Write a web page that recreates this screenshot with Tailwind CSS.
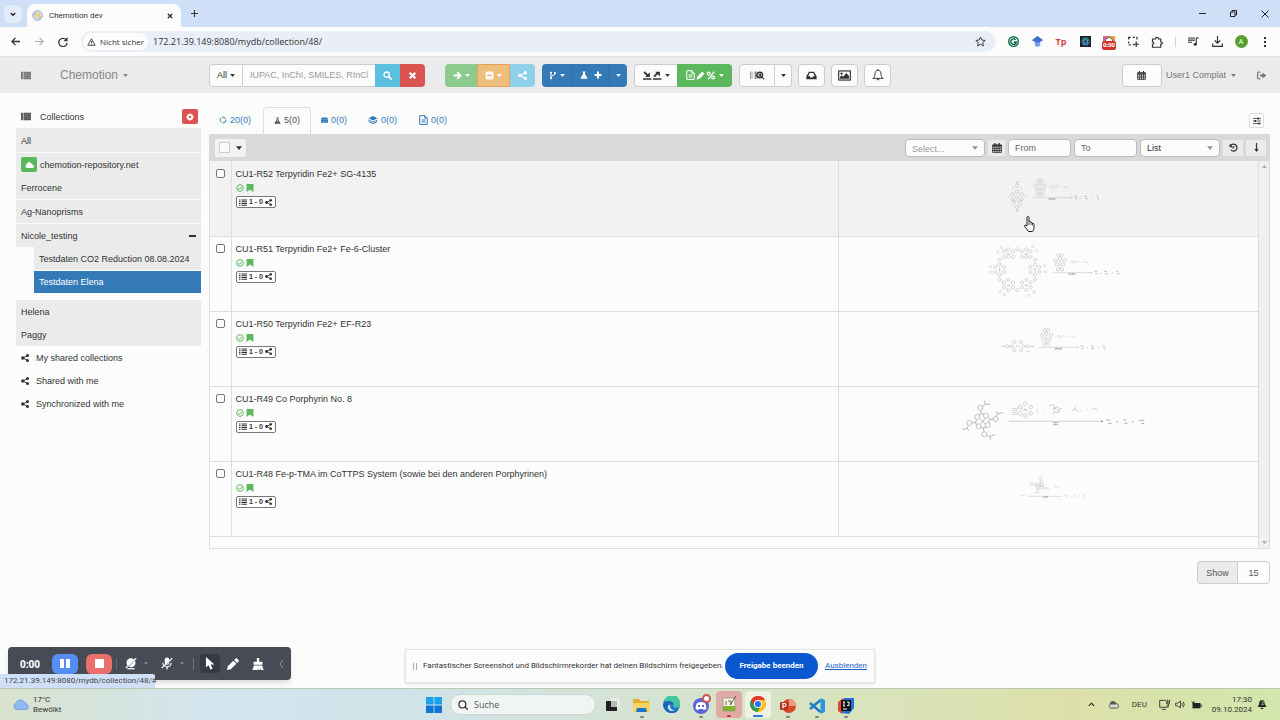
<!DOCTYPE html>
<html lang="de">
<head>
  <meta charset="UTF-8">
  <title>Chemotion dev</title>
  <meta name="viewport" content="width=device-width, initial-scale=1.0">
  <script src="https://cdn.jsdelivr.net/npm/@tailwindcss/browser@4"></script>
</head>
<body class="relative flex flex-col min-h-screen bg-[#fcfcfc] font-['Liberation_Sans',Arial,sans-serif] text-[9px] leading-3 text-[#333] overflow-x-hidden">

  <!-- Icon sprite -->
  <svg class="absolute w-0 h-0" aria-hidden="true">
    <symbol id="caret" viewBox="0 0 8 5"><path d="M0 0h8L4 5z" fill="currentColor"/></symbol>
    <symbol id="list" viewBox="0 0 16 14"><path d="M0 1h3v12H0zM4 1h12v12H4z" fill="currentColor"/><path d="M4 4h12M4 7h12M4 10h12" stroke="#fff" stroke-opacity=".25"/></symbol>
    <symbol id="listlines" viewBox="0 0 16 14"><path d="M0 2h3M5 2h11M0 5.500h3M5 5.500h11M0 9h3M5 9h11M0 12.500h3M5 12.500h11" stroke="currentColor" stroke-width="2.200"/></symbol>
    <symbol id="share" viewBox="0 0 16 16"><path d="M13 3 4 8l9 5" fill="none" stroke="currentColor" stroke-width="2"/><circle cx="13" cy="3" r="3" fill="currentColor"/><circle cx="3.500" cy="8" r="3.300" fill="currentColor"/><circle cx="13" cy="13" r="3" fill="currentColor"/></symbol>
    <symbol id="search" viewBox="0 0 16 16"><circle cx="6.500" cy="6.500" r="4.700" fill="none" stroke="currentColor" stroke-width="2.400"/><path d="m10 10 4.500 4.500" stroke="currentColor" stroke-width="3" stroke-linecap="round"/></symbol>
    <symbol id="times" viewBox="0 0 16 16"><path d="m3 3 10 10M13 3 3 13" stroke="currentColor" stroke-width="4"/></symbol>
    <symbol id="arrow-right" viewBox="0 0 16 16"><path d="M1 8h12M7.500 2l6 6-6 6" fill="none" stroke="currentColor" stroke-width="3.200"/></symbol>
    <symbol id="minus-square" viewBox="0 0 16 16"><rect x="1" y="1" width="14" height="14" rx="3" fill="currentColor"/><path d="M4 8h8" stroke="#f0ad4e" stroke-width="2.400"/></symbol>
    <symbol id="fork" viewBox="0 0 16 16"><path d="M4 3v10M12 3v2c0 3-8 3-8 6" fill="none" stroke="currentColor" stroke-width="2"/><circle cx="4" cy="2.500" r="2.200" fill="currentColor"/><circle cx="12" cy="3" r="2.200" fill="currentColor"/><circle cx="4" cy="13.500" r="2.200" fill="currentColor"/></symbol>
    <symbol id="flask" viewBox="0 0 16 16"><path d="M5 1h6v1.500h-1V6l5 8c.3 1-.2 1.500-1 1.500H2c-.8 0-1.300-.5-1-1.500l5-8V2.500H5z" fill="currentColor"/><path d="M7.500 3v3.500L5.500 10h5l-2-3.500V3z" fill="#fff" fill-opacity=".6"/></symbol>
    <symbol id="plus" viewBox="0 0 16 16"><path d="M8 1v14M1 8h14" stroke="currentColor" stroke-width="4"/></symbol>
    <symbol id="export" viewBox="0 0 36 16"><path d="M0 13h16v3H0zM19 13h16v3H19z" fill="currentColor"/><path d="m2 1 7 7M21 10l7-7" stroke="currentColor" stroke-width="3.500"/><path d="M4 11h9V2zM23 1h9v9z" fill="currentColor"/></symbol>
    <symbol id="doc" viewBox="0 0 14 16"><path d="M1 1h8l4 4v10H1zM9 1v4h4M4 8h6M4 11h6" fill="none" stroke="currentColor" stroke-width="1.600"/></symbol>
    <symbol id="pencil" viewBox="0 0 16 16"><path d="m1 15 1-5 9-9 4 4-9 9z" fill="currentColor"/></symbol>
    <symbol id="percent" viewBox="0 0 16 16"><path d="m14 1-11 14" stroke="currentColor" stroke-width="2.200"/><circle cx="4" cy="4.500" r="2.600" fill="none" stroke="currentColor" stroke-width="2.200"/><circle cx="12" cy="11.500" r="2.600" fill="none" stroke="currentColor" stroke-width="2.200"/></symbol>
    <symbol id="barcode" viewBox="0 0 26 16"><path d="M1 1v13" stroke="#888" stroke-width="2"/><path d="M4 1v13M7 1v13" stroke="#aaa"/><path d="M10 1v13" stroke="#555" stroke-width="2"/><circle cx="17" cy="7" r="5" fill="none" stroke="currentColor" stroke-width="2.500"/><path d="M16 4v6m2.500-6v6M21 11l4 4" stroke="currentColor" stroke-width="2"/></symbol>
    <symbol id="inbox" viewBox="0 0 16 14"><path d="M4 1h8l4 7v5H0V8zM5 3 3 8h2.500l1 2h3l1-2H13l-2-5z" fill="currentColor" fill-rule="evenodd"/></symbol>
    <symbol id="image" viewBox="0 0 20 16"><rect x="1" y="1" width="18" height="14" fill="none" stroke="currentColor" stroke-width="1.800"/><circle cx="5.500" cy="5" r="1.800" fill="currentColor"/><path d="M3 13v-3l3-2 2 2 5-6 4 5v4z" fill="currentColor"/></symbol>
    <symbol id="bell" viewBox="0 0 16 16"><path d="M8 1.500C5 2 4 4 4 7c0 3-1.500 4-2.800 5.500h13.600C13.500 11 12 10 12 7c0-3-1-5-4-5.500zM6.300 13c.2 2 3.200 2 3.400 0M8 0v2" fill="none" stroke="currentColor" stroke-width="1.300"/></symbol>
    <symbol id="calendar" viewBox="0 0 16 16"><path d="M1 3h14v12H1zM1 6h14M1 9h14M1 12h14M4.500 6v9M8 6v9M11.500 6v9" fill="none" stroke="currentColor" stroke-width="1.400"/><path d="M1 3h14v2H1z" fill="currentColor"/><path d="M4.500 0v4M11.500 0v4" stroke="currentColor" stroke-width="2"/></symbol>
    <symbol id="logout" viewBox="0 0 18 16"><path d="M7 2H4Q2 2 2 4v8q0 2 2 2h3" fill="none" stroke="currentColor" stroke-width="2.200"/><path d="M6 6.200h5V2.500L17.500 8 11 13.500V9.800H6z" fill="currentColor"/></symbol>
    <symbol id="gear" viewBox="0 0 16 16"><path d="M6.500 1h3l.5 2 1.800-.8 2 2L13 6l2 .5v3l-2 .5.8 1.800-2 2L10 13l-.5 2h-3L6 13l-1.800.8-2-2L3 10l-2-.5v-3L3 6l-.8-1.800 2-2L6 3zM8 5.500a2.500 2.500 0 1 0 0 5 2.500 2.500 0 0 0 0-5z" fill="currentColor" fill-rule="evenodd"/></symbol>
    <symbol id="cloud" viewBox="0 0 18 12"><path d="M4 12a4 4 0 0 1-.7-7.500A5 5 0 0 1 12.500 3 3.500 3.500 0 0 1 15 6a3 3 0 0 1 0 6z" fill="currentColor"/></symbol>
    <symbol id="ring-sample" viewBox="0 0 16 16"><circle cx="8" cy="8" r="5.800" fill="none" stroke="currentColor" stroke-width="2" stroke-dasharray="10 2.100"/></symbol>
    <symbol id="plate" viewBox="0 0 16 12"><path d="M2 0h12l2 4v8H0V4z" fill="currentColor"/><path d="M0 5h16M2 9h12" stroke="#fff" stroke-opacity=".5"/></symbol>
    <symbol id="layers" viewBox="0 0 18 16"><path d="m9 0 9 4.500L9 9 0 4.500z" fill="currentColor"/><path d="m0 8 9 4.500L18 8M0 11l9 4.500 9-4.500" fill="none" stroke="currentColor" stroke-width="1.800"/></symbol>
    <symbol id="sliders" viewBox="0 0 16 16"><path d="M0 3h16M0 8h16M0 13h16" stroke="currentColor" stroke-width="1.500"/><path d="M9 1h3v4H9zM3 6h3v4H3zM10 11h3v4h-3z" fill="currentColor"/></symbol>
    <symbol id="undo" viewBox="0 0 16 16"><path d="M3 4.500A6.200 6.200 0 1 1 3 12" fill="none" stroke="currentColor" stroke-width="2.200"/><path d="M1 1v6.500h6.500z" fill="currentColor"/><path d="M8.500 5v4H6" fill="none" stroke="currentColor" stroke-width="1.600"/></symbol>
    <symbol id="arrow-down" viewBox="0 0 8 16"><path d="M4 0v13" stroke="currentColor" stroke-width="2.200"/><path d="M0 10.500h8L4 16z" fill="currentColor"/></symbol>
    <symbol id="check" viewBox="0 0 16 16"><circle cx="8" cy="8" r="6.700" fill="none" stroke="currentColor" stroke-width="2"/><path d="m4.500 8 2.700 2.700 4.500-5" fill="none" stroke="currentColor" stroke-width="2"/></symbol>
    <symbol id="bookmark" viewBox="0 0 12 14"><path d="M0 0h12v14L6 9.500 0 14z" fill="currentColor"/></symbol>

    <!-- Parts of the reaction schemes -->
    <marker id="ring" viewBox="0 0 14 14" refX="7" refY="7" markerWidth="14" markerHeight="14" markerUnits="userSpaceOnUse"><path d="m7 2 4.500 2.500v5L7 12 2.500 9.500v-5z" fill="none" stroke="#bdbdbd" stroke-width="1.800"/></marker>
    <marker id="ring-sm" viewBox="0 0 14 14" refX="7" refY="7" markerWidth="14" markerHeight="14" markerUnits="userSpaceOnUse"><path d="m7 3 3 4-3 4-3-4zM2 4l2 1M10 9l3 2M3 11l2-2M10 5l2-2" fill="none" stroke="#c8c8c8" stroke-width="1.500"/></marker>
    <marker id="ring-lg" viewBox="0 0 24 24" refX="12" refY="12" markerWidth="24" markerHeight="24" markerUnits="userSpaceOnUse"><path d="m12 4 7 4v8l-7 4-7-4V8z" fill="none" stroke="#999" stroke-width="1.800"/></marker>
    <marker id="ring-lg-light" viewBox="0 0 24 24" refX="12" refY="12" markerWidth="24" markerHeight="24" markerUnits="userSpaceOnUse"><path d="m12 6 5 3v6l-5 3-5-3V9z" fill="none" stroke="#b5b5b5" stroke-width="1.800"/></marker>
    <g id="reagents" fill="none" stroke="#c4c4c4" stroke-width="2">
      <polyline points="324,61 334,61 315,76 329,72 343,76 320,88 338,88 323,103 335,103" stroke="none" marker-start="url(#ring)" marker-mid="url(#ring)" marker-end="url(#ring)"/>
      <path d="M329 78v22"/>
      <path d="M356 82h3M362 81l7-3 5 4 6-4 5 1M395 81h3M402 78l5 4 7 1M370 83l-5 3"/>
      <path d="M306 113h118" stroke="#ccc"/><path d="m422 111 5 2-5 2z" fill="#aaa" stroke="none"/>
      <path d="M355 117h21" stroke="#aaa" stroke-width="5" stroke-dasharray="4 1"/>
      <path d="M432 109h8M435 116h6M450 114h3M462 109h8M464 116h8M485 114h3M498 109h6M500 116h7" stroke="#bbb" stroke-width="3"/>
    </g>
  </svg>

  <!-- Browser tab strip -->
  <div class="flex items-end h-[27px] pl-1 bg-[#cfdff8] font-[Roboto,sans-serif]">
    <button aria-label="Tabs durchsuchen" class="flex items-center justify-center w-[18px] h-[18px] mb-1 rounded-md bg-[#e3ecfb]"><svg class="w-[6px] h-[5px]" viewBox="0 0 8 6"><path d="m1 1 3 3 3-3" fill="none" stroke="#222" stroke-width="1.800"/></svg></button>
    <div class="flex items-center gap-[6px] w-[154px] h-[23px] ml-[5px] px-[5px] rounded-t-lg bg-[#fcfcfc] text-[8px]">
      <svg class="w-[11px] h-[11px]" viewBox="0 0 22 22"><circle cx="11" cy="11" r="9.500" fill="#e4ecef" stroke="#7fa8c4" stroke-width="2"/><path d="M7 6h8v10H7z" fill="#f2d7a0" stroke="#d9a860"/><path d="M4 11a7 7 0 0 1 4-6M18 11a7 7 0 0 1-4 6" fill="none" stroke="#888"/></svg>
      <span class="grow">Chemotion dev</span>
      <button aria-label="Tab schließen" class="px-[3px]"><svg class="w-[6px] h-[6px]" viewBox="0 0 8 8"><path d="m1 1 6 6M7 1 1 7" stroke="#222" stroke-width="1.500"/></svg></button>
    </div>
    <button aria-label="Neuer Tab" class="flex items-center justify-center w-[26px] h-[27px]"><svg class="w-[7px] h-[7px]" viewBox="0 0 8 8"><path d="M4 0v8M0 4h8" stroke="#333" stroke-width="1.200"/></svg></button>
    <div class="flex ml-auto h-[27px]">
      <button aria-label="Minimieren" class="flex items-center justify-center w-[31px]"><svg class="w-[7px] h-[7px]" viewBox="0 0 7 7"><path d="M0 3.500h7" stroke="#222"/></svg></button>
      <button aria-label="Verkleinern" class="flex items-center justify-center w-[31px]"><svg class="w-[7px] h-[7px]" viewBox="0 0 14 14"><path d="M1 4h9v9H1zM4 4V1h9v9h-3" fill="none" stroke="#222" stroke-width="2"/></svg></button>
      <button aria-label="Schließen" class="flex items-center justify-center w-[31px]"><svg class="w-[8px] h-[8px]" viewBox="0 0 8 8"><path d="m.5.500 7 7M7.500.500l-7 7" stroke="#222"/></svg></button>
    </div>
  </div>

  <!-- Browser toolbar -->
  <div class="flex items-center h-[30px] px-[3px] border-b border-[#e0e3e6] bg-[#fcfcfc] font-['Open_Sans',sans-serif]">
    <button aria-label="Zurück" class="flex justify-center w-6"><svg class="w-[9px] h-[9px]" viewBox="0 0 10 10"><path d="M10 5H1m4-4L1 5l4 4" fill="none" stroke="#333" stroke-width="1.400"/></svg></button>
    <button aria-label="Vorwärts" class="flex justify-center w-6"><svg class="w-[9px] h-[9px]" viewBox="0 0 10 10"><path d="M0 5h9M5 1l4 4-4 4" fill="none" stroke="#aaa" stroke-width="1.200"/></svg></button>
    <button aria-label="Neu laden" class="flex justify-center w-6"><svg class="w-[10px] h-[10px]" viewBox="0 0 12 12"><path d="M10 3.500A5 5 0 1 0 11 7" fill="none" stroke="#333" stroke-width="1.500"/><path d="M11.500 0v5h-5z" fill="#333"/></svg></button>
    <div class="flex items-center grow h-[21px] ml-[6px] mr-[5px] pl-[2px] pr-[10px] rounded-full bg-[#e9eef8]">
      <button class="flex items-center gap-1 h-[17px] px-1 rounded-full bg-[#fcfcfc] text-[8px]">
        <svg class="w-[9px] h-[8px]" viewBox="0 0 12 11"><path d="M6 1 11 10H1zM6 4v3M6 8v1" fill="none" stroke="#333" stroke-width="1.200"/></svg>Nicht sicher</button>
      <input aria-label="Adresse" value="172.21.39.149:8080/mydb/collection/48/" class="grow ml-[5px] bg-transparent text-[9px] outline-none">
      <svg class="w-[11px] h-[11px]" viewBox="0 0 16 16"><path d="m8 1.500 2 4.400 4.800.5-3.600 3.200 1 4.800L8 12l-4.200 2.400 1-4.800L1.200 6.400 6 5.900z" fill="none" stroke="#333" stroke-width="1.400"/></svg>
    </div>
    <div class="flex items-center">
      <span class="flex justify-center w-6"><svg class="w-[11px] h-[11px]" viewBox="0 0 16 16"><circle cx="8" cy="8" r="7" fill="#e8f4ee" stroke="#12704a" stroke-width="2"/><path d="M11 5.500A4 4 0 1 0 12 9H8.500" fill="none" stroke="#0c5a4a" stroke-width="2"/></svg></span>
      <span class="flex justify-center w-6"><svg class="w-[11px] h-[11px]" viewBox="0 0 16 16"><path d="M8 0 0 6l4 2v6l4 2 4-2V8l4-2z" fill="#7ba4ee"/><path d="M8 0 0 6l8 4 8-4z" fill="#3f6fd0"/></svg></span>
      <span class="flex justify-center w-6 text-[9px] font-bold text-[#d5453c]">Tp</span>
      <span class="flex justify-center w-6"><svg class="w-[11px] h-[11px]" viewBox="0 0 16 16"><path d="M0 0h16v16H0z" fill="#1b222c"/><g fill="none" stroke="#4fb4dd"><ellipse cx="8" cy="8" rx="6" ry="2.500"/><ellipse cx="8" cy="8" rx="6" ry="2.500" transform="rotate(60 8 8)"/><ellipse cx="8" cy="8" rx="6" ry="2.500" transform="rotate(120 8 8)"/></g></svg></span>
      <span class="relative flex justify-center w-6"><svg class="w-[12px] h-[12px]" viewBox="0 0 16 16"><path d="M0 0h8v8H0z" fill="#e25fa0"/><path d="M8 0h8v8H8z" fill="#e9a13b"/><path d="M3 7a5 5 0 0 1 10 0" fill="#fff" stroke="#333"/></svg><span class="absolute top-[5px] px-px rounded-xs bg-[#d0342c] text-[6px] leading-[9px] font-bold text-white">0:00</span></span>
      <span class="flex justify-center w-6"><svg class="w-[11px] h-[11px]" viewBox="0 0 16 16"><path d="M1 5V2h3M7 2h3M13 5V2h-1M1 8v3M1 13h3M7 13h2M12 8v8M8 12h8" fill="none" stroke="#333" stroke-width="1.800"/></svg></span>
      <span class="flex justify-center w-6"><svg class="w-[12px] h-[12px]" viewBox="0 0 16 16"><path d="M2 4h4c0-3 4-3 4 0h3v4c3 0 3 3 0 3v4H2v-4c2.500 0 2.500-3 0-3z" fill="none" stroke="#333" stroke-width="1.600"/></svg></span>
      <span class="flex justify-center w-3"><span class="w-px h-[10px] bg-[#c5d6f5]"></span></span>
      <span class="flex justify-center w-6"><svg class="w-[11px] h-[11px]" viewBox="0 0 16 16"><path d="M0 3h10M0 6h10M0 9h6M12 12V3h4" fill="none" stroke="#333" stroke-width="1.600"/><circle cx="10.500" cy="12" r="2.200" fill="#333"/></svg></span>
      <span class="flex justify-center w-6"><svg class="w-[11px] h-[11px]" viewBox="0 0 16 16"><path d="M8 0v10M4 6.500l4 4 4-4M1 11v4h14v-4" fill="none" stroke="#333" stroke-width="1.700"/></svg></span>
      <span class="flex justify-center w-6"><span class="w-[13px] h-[13px] rounded-full bg-[#5a9e32] text-center text-[7px] leading-[13px] text-white">A</span></span>
      <span class="flex justify-center w-6"><svg class="w-[3px] h-[10px]" viewBox="0 0 3 10"><path d="M0 0h2v2H0zM0 4h2v2H0zM0 8h2v2H0z" fill="#333"/></svg></span>
    </div>
  </div>

  <!-- App navigation -->
  <nav class="flex items-center h-[36px] pl-[21px] pr-[13px] bg-[#ebebeb] text-[#777]">
    <button aria-label="Menü"><svg class="w-[10px] h-[9px]"><use href="#list"/></svg></button>
    <a href="#" class="flex items-center gap-[5px] w-[149px] ml-[29px] text-[12px] text-[#888]">Chemotion <svg class="w-[5px] h-[3px]"><use href="#caret"/></svg></a>
    <div class="flex h-[23px] text-[#333]">
      <button class="flex items-center justify-center gap-[3px] w-[34px] rounded-l-sm border border-[#ccc] bg-[#fcfcfc]">All <svg class="w-[5px] h-[3px]"><use href="#caret"/></svg></button>
      <input aria-label="Suche" placeholder="IUPAC, InChI, SMILES, RInChI" class="w-[132px] px-[7px] border-y border-[#ccc] bg-[#fcfcfc] outline-none placeholder:text-[#999]">
      <button aria-label="Suchen" class="flex items-center justify-center w-[25px] bg-[#5bc0de] text-white"><svg class="w-[9px] h-[9px]"><use href="#search"/></svg></button>
      <button aria-label="Leeren" class="flex items-center justify-center w-[25px] rounded-r-sm bg-[#d9534f] text-white"><svg class="w-[9px] h-[9px]"><use href="#times"/></svg></button>
    </div>
    <div class="flex h-[23px] ml-5 text-white">
      <button aria-label="Verschieben" class="flex items-center justify-center gap-[3px] w-8 rounded-l-sm bg-[#8dca8d]"><svg class="w-[9px] h-[9px]"><use href="#arrow-right"/></svg><svg class="w-[5px] h-[3px]"><use href="#caret"/></svg></button>
      <button aria-label="Entfernen" class="flex items-center justify-center gap-[3px] w-[33px] border border-[#eba05a] bg-[#eebe7c]"><svg class="w-[9px] h-[9px]"><use href="#minus-square"/></svg><svg class="w-[5px] h-[3px]"><use href="#caret"/></svg></button>
      <button aria-label="Teilen" class="flex items-center justify-center w-[25px] rounded-r-sm bg-[#8dd2e8]"><svg class="w-[9px] h-[9px]"><use href="#share"/></svg></button>
    </div>
    <div class="flex h-[23px] ml-[7px] rounded-sm bg-[#337ab7] text-white">
      <button aria-label="Aufteilen" class="flex items-center justify-center gap-[3px] w-[30px] border-r border-[#2e6da4]"><svg class="w-[8px] h-[9px]"><use href="#fork"/></svg><svg class="w-[5px] h-[3px]"><use href="#caret"/></svg></button>
      <button aria-label="Neue Reaktion" class="flex items-center justify-center gap-[6px] w-[38px] border-r border-[#2e6da4]"><svg class="w-[8px] h-[8px]"><use href="#flask"/></svg><svg class="w-[8px] h-[8px]"><use href="#plus"/></svg></button>
      <button aria-label="Neu" class="flex items-center justify-center w-[17px]"><svg class="w-[5px] h-[3px]"><use href="#caret"/></svg></button>
    </div>
    <div class="flex h-[23px] ml-[7px] text-[#333]">
      <button aria-label="Import und Export" class="flex items-center justify-center gap-[3px] w-[43px] rounded-l-sm border border-r-0 border-[#ccc] bg-[#fcfcfc]"><svg class="w-[19px] h-[9px]"><use href="#export"/></svg><svg class="w-[5px] h-[3px]"><use href="#caret"/></svg></button>
      <button aria-label="Bericht" class="flex items-center justify-center gap-px w-[55px] rounded-r-sm bg-[#5cb85c] text-white"><svg class="w-[9px] h-[10px]"><use href="#doc"/></svg><svg class="w-[9px] h-[9px]"><use href="#pencil"/></svg><svg class="w-[10px] h-[9px]"><use href="#percent"/></svg><svg class="w-[5px] h-[3px] ml-[2px]"><use href="#caret"/></svg></button>
    </div>
    <div class="flex h-[23px] ml-[7px] text-[#333]">
      <button aria-label="Barcode scannen" class="flex items-center justify-center w-[36px] rounded-l-sm border border-[#ccc] bg-[#fcfcfc]"><svg class="w-[15px] h-[9px]"><use href="#barcode"/></svg></button>
      <button aria-label="Scan-Optionen" class="flex items-center justify-center w-[17px] rounded-r-sm border border-l-0 border-[#ccc] bg-[#fcfcfc]"><svg class="w-[5px] h-[3px]"><use href="#caret"/></svg></button>
    </div>
    <div class="flex h-[23px] gap-[6px] ml-[6px] text-[#333]">
      <button aria-label="Posteingang" class="flex items-center justify-center w-[27px] rounded-sm border border-[#ccc] bg-[#fcfcfc]"><svg class="w-[11px] h-[9px]"><use href="#inbox"/></svg></button>
      <button aria-label="Bilder" class="flex items-center justify-center w-[27px] rounded-sm border border-[#ccc] bg-[#fcfcfc]"><svg class="w-[13px] h-[11px]"><use href="#image"/></svg></button>
      <button aria-label="Benachrichtigungen" class="flex items-center justify-center w-[27px] rounded-sm border border-[#ccc] bg-[#fcfcfc]"><svg class="w-[12px] h-[12px]"><use href="#bell"/></svg></button>
    </div>
    <div class="flex items-center h-[23px] ml-auto">
      <button aria-label="Kalender" class="flex items-center justify-center w-10 h-full rounded-sm border border-[#ccc] bg-[#fcfcfc] text-[#333]"><svg class="w-[9px] h-[9px]"><use href="#calendar"/></svg></button>
      <a href="#" class="flex items-center gap-[5px] ml-1">User1 Complat <svg class="w-[5px] h-[3px]"><use href="#caret"/></svg></a>
      <button aria-label="Abmelden" class="ml-5"><svg class="w-[11px] h-[9px]"><use href="#logout"/></svg></button>
    </div>
  </nav>

  <main class="flex grow items-start gap-2 pl-4 pr-[10px] pt-[14px] pb-[100px]">

    <!-- Collections -->
    <aside class="w-[185px] shrink-0">
      <div class="flex items-center h-[22px] pb-[2px] pl-[5px] pr-[3px] border-b border-[#ebebeb]">
        <svg class="w-[10px] h-[9px] text-[#555]"><use href="#list"/></svg>
        <span class="grow ml-[9px]">Collections</span>
        <button aria-label="Sammlungen verwalten" class="flex items-center justify-center w-4 h-[15px] rounded-xs bg-[#d9534f] text-white"><svg class="w-[8px] h-[8px]"><use href="#gear"/></svg></button>
      </div>
      <ul>
        <li class="flex items-center h-6 px-[5px] border-b border-[#fcfcfc] bg-[#ebebeb]"><a href="#">All</a></li>
        <li class="flex items-center gap-[3px] h-[23px] px-[5px] bg-[#ebebeb]"><span class="flex items-center justify-center w-4 h-[15px] rounded-xs bg-[#5cb85c] text-white"><svg class="w-[9px] h-[6px]"><use href="#cloud"/></svg></span><a href="#">chemotion-repository.net</a></li>
        <li class="flex items-center h-6 px-[5px] border-b border-[#fcfcfc] bg-[#ebebeb]"><a href="#">Ferrocene</a></li>
        <li class="flex items-center h-6 px-[5px] border-b border-[#fcfcfc] bg-[#ebebeb]"><a href="#">Ag-Nanoprisms</a></li>
        <li>
          <div class="flex items-center justify-between h-[23px] px-[5px] bg-[#ebebeb]"><a href="#">Nicole_testing</a><button aria-label="Zuklappen" class="w-[7px] h-[2px] bg-[#333]"></button></div>
          <ul class="ml-[18px] mb-[7px]">
            <li class="flex items-center h-6 px-[5px] border-b border-[#fcfcfc] bg-[#ebebeb] whitespace-nowrap"><a href="#">Testdaten CO2 Reduction 08.08.2024</a></li>
            <li class="flex items-center h-[22px] px-[5px] bg-[#337ab7] text-white"><a href="#">Testdaten Elena</a></li>
          </ul>
        </li>
        <li class="flex items-center h-[23px] px-[5px] bg-[#ebebeb]"><a href="#">Helena</a></li>
        <li class="flex items-center h-[23px] px-[5px] bg-[#ebebeb]"><a href="#">Paggy</a></li>
        <li class="flex items-center gap-[7px] h-[23px] px-[5px]"><svg class="w-[8px] h-[8px]"><use href="#share"/></svg><a href="#">My shared collections</a></li>
        <li class="flex items-center gap-[7px] h-[23px] px-[5px]"><svg class="w-[8px] h-[8px]"><use href="#share"/></svg><a href="#">Shared with me</a></li>
        <li class="flex items-center gap-[7px] h-[23px] px-[5px]"><svg class="w-[8px] h-[8px]"><use href="#share"/></svg><a href="#">Synchronized with me</a></li>
      </ul>
    </aside>

    <!-- Element list -->
    <section class="grow min-w-0">
      <div class="flex items-center h-[27px] text-[#337ab7]">
        <a href="#" class="flex items-center gap-[3px] h-full pb-[2px] pl-[10px] pr-3"><svg class="w-[8px] h-[8px]"><use href="#ring-sample"/></svg>20(0)</a>
        <a href="#" class="flex items-center gap-[3px] h-full pb-[2px] px-[10px] rounded-t-sm border border-b-0 border-[#ddd] text-[#555]"><svg class="w-[7px] h-[7px]"><use href="#flask"/></svg>5(0)</a>
        <a href="#" class="flex items-center gap-[3px] h-full pb-[2px] px-[10px]"><svg class="w-[7px] h-[6px]"><use href="#plate"/></svg>0(0)</a>
        <a href="#" class="flex items-center gap-[3px] h-full pb-[2px] px-[11px]"><svg class="w-[10px] h-[8px]"><use href="#layers"/></svg>0(0)</a>
        <a href="#" class="flex items-center gap-[3px] h-full pb-[2px] px-[11px]"><svg class="w-[9px] h-[10px]"><use href="#doc"/></svg>0(0)</a>
        <button aria-label="Tab-Layout" class="flex items-center justify-center w-[15px] h-[15px] ml-auto mr-[6px] rounded-xs border border-[#ddd] text-[#333]"><svg class="w-[8px] h-[8px]"><use href="#sliders"/></svg></button>
      </div>

      <div class="flex items-center justify-end h-[27px] pl-[6px] pr-1 bg-[#d9d9d9]">
        <div class="flex items-center gap-[6px] h-[18px] mr-auto px-1 rounded-xs bg-[#f2f2f2]"><input type="checkbox" aria-label="Alle auswählen" class="w-[11px] h-[11px] appearance-none border border-[#ccc] bg-[#fafafa]"><button aria-label="Auswahl-Optionen"><svg class="w-[6px] h-[4px]"><use href="#caret"/></svg></button></div>
        <div class="relative">
          <select aria-label="Ersteller" class="w-20 h-[18px] pl-[6px] pt-[2px] appearance-none rounded-sm border border-[#bbb] bg-[#fcfcfc] text-[#999]"><option>Select...</option></select>
          <svg class="absolute right-[7px] top-[7px] w-[6px] h-[4px] text-[#999] pointer-events-none"><use href="#caret"/></svg>
        </div>
        <button aria-label="Datum" class="flex items-center justify-center w-[17px] h-4 mx-[3px] bg-[#ebebeb]"><svg class="w-[10px] h-[10px]"><use href="#calendar"/></svg></button>
        <input aria-label="From" placeholder="From" class="w-[63px] h-[18px] px-[6px] rounded-sm border border-[#bbb] bg-[#fcfcfc] placeholder:text-[#666]">
        <input aria-label="To" placeholder="To" class="w-[63px] h-[18px] mx-[3px] px-[6px] rounded-sm border border-[#bbb] bg-[#fcfcfc] placeholder:text-[#666]">
        <div class="relative">
          <select aria-label="Gruppierung" class="w-20 h-[18px] pl-[6px] appearance-none rounded-sm border border-[#bbb] bg-[#fcfcfc]"><option>List</option></select>
          <svg class="absolute right-[7px] top-[7px] w-[6px] h-[4px] text-[#999] pointer-events-none"><use href="#caret"/></svg>
        </div>
        <button aria-label="Zurücksetzen" class="flex items-center justify-center w-5 h-4 mx-[3px] bg-[#ebebeb]"><svg class="w-[9px] h-[9px]"><use href="#undo"/></svg></button>
        <button aria-label="Sortierung" class="flex items-center justify-center w-5 h-4 bg-[#ebebeb]"><svg class="w-[5px] h-[9px]"><use href="#arrow-down"/></svg></button>
      </div>

      <div class="flex h-[388px] border-l border-b border-[#ddd]">
        <div class="grow">
          <table class="w-full table-fixed border-collapse">
            <colgroup><col class="w-[21px]"><col class="w-[58%]"><col></colgroup>
            <tbody>
              <tr class="h-[75px] align-top border-b border-[#ddd] bg-[#f2f2f2]">
                <td class="pt-2 pl-[6px] border-r border-[#ddd]"><input type="checkbox" aria-label="CU1-R52" class="block w-[9px] h-[9px] appearance-none rounded-xs border border-[#777] bg-white"></td>
                <td class="pt-[7px] pl-1 border-r border-[#ddd]">
                  <a href="#">CU1-R52 Terpyridin Fe2+ SG-4135</a>
                  <div class="flex items-center gap-[2px] h-[16px] text-[#5cb85c]"><svg class="w-[8px] h-[8px]"><use href="#check"/></svg><svg class="w-[8px] h-[8px]"><use href="#bookmark"/></svg></div>
                  <span class="flex items-center justify-center gap-[2px] w-10 h-3 rounded-xs border border-[#777] bg-white text-[7px] font-bold"><svg class="w-[8px] h-[7px]"><use href="#listlines"/></svg>1 - 0<svg class="w-[7px] h-[7px]"><use href="#share"/></svg></span>
                </td>
                <td>
                  <svg class="block w-60 h-[74px] mx-auto" viewBox="-4 3 720 222">
                    <polyline points="260,77 260,96 246,102 274,102 260,112 246,117 274,117 252,125 268,125 260,141" fill="none" marker-start="url(#ring)" marker-mid="url(#ring)" marker-end="url(#ring)"/>
                    <path d="M260 64v8M257 66h8M245 86l6-4M269 82l7 4M232 110h5M285 110h6M246 134l6 3M268 137l8-3M260 146v9M257 153h8" fill="none" stroke="#bbb" stroke-width="2"/>
                    <use href="#reagents"/>
                  </svg>
                </td>
              </tr>
              <tr class="h-[75px] align-top border-b border-[#ddd]">
                <td class="pt-[7px] pl-[6px] border-r border-[#ddd]"><input type="checkbox" aria-label="CU1-R51" class="block w-[9px] h-[9px] appearance-none rounded-xs border border-[#777] bg-white"></td>
                <td class="pt-[6px] pl-1 border-r border-[#ddd]">
                  <a href="#">CU1-R51 Terpyridin Fe2+ Fe-6-Cluster</a>
                  <div class="flex items-center gap-[2px] h-[16px] text-[#5cb85c]"><svg class="w-[8px] h-[8px]"><use href="#check"/></svg><svg class="w-[8px] h-[8px]"><use href="#bookmark"/></svg></div>
                  <span class="flex items-center justify-center gap-[2px] w-10 h-3 rounded-xs border border-[#777] bg-white text-[7px] font-bold"><svg class="w-[8px] h-[7px]"><use href="#listlines"/></svg>1 - 0<svg class="w-[7px] h-[7px]"><use href="#share"/></svg></span>
                </td>
                <td>
                  <svg class="block w-60 h-[74px] mx-auto" viewBox="-4 231 720 222">
                    <polyline points="222,274 234,268 248,274 261,268 274,274 288,268 300,274 300,291 288,291 274,291 248,291 234,291 222,291 208,299 208,314 195,321 221,321 195,336 221,336 208,344 208,359 221,367 234,359 248,367 221,382 234,390 248,382 261,390 275,382 288,390 301,382 301,367 288,359 275,367 314,359 314,344 300,336 327,336 300,321 327,321 314,314 314,299" fill="none" marker-start="url(#ring)" marker-mid="url(#ring)" marker-end="url(#ring)"/>
                    <polyline points="213,262 202,275 307,260 319,272 180,321 180,337 343,317 345,334 209,394 222,404 311,396 296,406" fill="none" marker-start="url(#ring-sm)" marker-mid="url(#ring-sm)" marker-end="url(#ring-sm)"/>
                    <path d="M230 282h10M283 282h10M208 324v10M314 324v10M230 376h10M283 376h10" stroke="#bbb" stroke-width="3"/>
                    <use href="#reagents" x="60" y="225"/>
                  </svg>
                </td>
              </tr>
              <tr class="h-[75px] align-top border-b border-[#ddd]">
                <td class="pt-[7px] pl-[6px] border-r border-[#ddd]"><input type="checkbox" aria-label="CU1-R50" class="block w-[9px] h-[9px] appearance-none rounded-xs border border-[#777] bg-white"></td>
                <td class="pt-[6px] pl-1 border-r border-[#ddd]">
                  <a href="#">CU1-R50 Terpyridin Fe2+ EF-R23</a>
                  <div class="flex items-center gap-[2px] h-[16px] text-[#5cb85c]"><svg class="w-[8px] h-[8px]"><use href="#check"/></svg><svg class="w-[8px] h-[8px]"><use href="#bookmark"/></svg></div>
                  <span class="flex items-center justify-center gap-[2px] w-10 h-3 rounded-xs border border-[#777] bg-white text-[7px] font-bold"><svg class="w-[8px] h-[7px]"><use href="#listlines"/></svg>1 - 0<svg class="w-[7px] h-[7px]"><use href="#share"/></svg></span>
                </td>
                <td>
                  <svg class="block w-60 h-[74px] mx-auto" viewBox="-4 456 720 222">
                    <polyline points="230,559 245,559 252,546 272,546 252,571 272,571 279,559 294,559" fill="none" marker-start="url(#ring)" marker-mid="url(#ring)" marker-end="url(#ring)"/>
                    <path d="M213 559h10M235 559h5M256 559h12M285 559h5M300 559h12M288 574h5M296 574h4" stroke="#bbb" stroke-width="2"/>
                    <use href="#reagents" x="19" y="449"/>
                  </svg>
                </td>
              </tr>
              <tr class="h-[75px] align-top border-b border-[#ddd]">
                <td class="pt-[7px] pl-[6px] border-r border-[#ddd]"><input type="checkbox" aria-label="CU1-R49" class="block w-[9px] h-[9px] appearance-none rounded-xs border border-[#777] bg-white"></td>
                <td class="pt-[6px] pl-1 border-r border-[#ddd]">
                  <a href="#">CU1-R49 Co Porphyrin No. 8</a>
                  <div class="flex items-center gap-[2px] h-[16px] text-[#5cb85c]"><svg class="w-[8px] h-[8px]"><use href="#check"/></svg><svg class="w-[8px] h-[8px]"><use href="#bookmark"/></svg></div>
                  <span class="flex items-center justify-center gap-[2px] w-10 h-3 rounded-xs border border-[#777] bg-white text-[7px] font-bold"><svg class="w-[8px] h-[7px]"><use href="#listlines"/></svg>1 - 0<svg class="w-[7px] h-[7px]"><use href="#share"/></svg></span>
                </td>
                <td>
                  <svg class="block w-60 h-[74px] mx-auto" viewBox="-4 6 720 222">
                    <g fill="none" stroke="#999" stroke-width="2">
                      <polyline points="150,68 196,102 162,148 117,114 141,96 167,92 145,124 172,120" stroke="none" marker-start="url(#ring-lg)" marker-mid="url(#ring-lg)" marker-end="url(#ring-lg)"/>
                      <path d="M152 76v10l-6 3M152 86l9 2M188 103h-10l-4-5M178 103l-3 10M160 140v-11l-8-2M160 129l8-3M125 113h11l2-10M136 113l3 6M150 102l14 14M164 101l-13 15"/>
                      <path d="m157 64 7-6-1-11M164 58h16M199 94l2-8-4-8M201 86l17-3M114 122l-4 9-14 2M110 131l7 6M171 151l8 3 15-5M179 154l2 10"/>
                    </g>
                    <g fill="none" stroke="#bbb" stroke-width="2">
                      <polyline points="285,56 270,66 301,66 270,85 301,85 285,92" stroke="none" marker-start="url(#ring-lg-light)" marker-mid="url(#ring-lg-light)" marker-end="url(#ring-lg-light)"/>
                      <path d="M243 70h20M247 76h16M243 82h18M247 88h14M277 74h16M281 70l9 8M318 72h5M318 79h5M342 76h4M356 62l14-3 3 10 9-3 7 6-4 10-12 1-4-12 8-2M373 68l15 14M366 86l8-3M395 70l-8 3M409 76h3M424 78l10-6 8 6M434 72v-7M446 79h7M469 74h3M486 74l7-4 8 4"/>
                      <path d="M236 109h280" stroke="#bbb"/><path d="m513 106 6 3-6 3z" fill="#777" stroke="none"/>
                      <path d="M369 113h15M369 119h15" stroke="#aaa" stroke-width="4" stroke-dasharray="4 1"/>
                      <path d="M529 105h11M534 115h9M558 110h6M580 105h7M583 115h8M605 110h5M627 106h14M633 115h9" stroke="#999" stroke-width="3" stroke-dasharray="4 1"/>
                    </g>
                  </svg>
                </td>
              </tr>
              <tr class="h-[75px] align-top border-b border-[#ddd]">
                <td class="pt-[7px] pl-[6px] border-r border-[#ddd]"><input type="checkbox" aria-label="CU1-R48" class="block w-[9px] h-[9px] appearance-none rounded-xs border border-[#777] bg-white"></td>
                <td class="pt-[6px] pl-1 border-r border-[#ddd]">
                  <a href="#">CU1-R48 Fe-p-TMA im CoTTPS System (sowie bei den anderen Porphyrinen)</a>
                  <div class="flex items-center gap-[2px] h-[16px] text-[#5cb85c]"><svg class="w-[8px] h-[8px]"><use href="#check"/></svg><svg class="w-[8px] h-[8px]"><use href="#bookmark"/></svg></div>
                  <span class="flex items-center justify-center gap-[2px] w-10 h-3 rounded-xs border border-[#777] bg-white text-[7px] font-bold"><svg class="w-[8px] h-[7px]"><use href="#listlines"/></svg>1 - 0<svg class="w-[7px] h-[7px]"><use href="#share"/></svg></span>
                </td>
                <td>
                  <svg class="block w-60 h-[74px] mx-auto" viewBox="-4 231 720 222">
                    <g fill="none" stroke="#c0c0c0" stroke-width="2">
                      <polyline points="331,284 306,297 345,310 321,320" stroke="none" marker-start="url(#ring-sm)" marker-mid="url(#ring-sm)" marker-end="url(#ring-sm)"/>
                      <polyline points="322,299 334,298 323,308 334,307" stroke="none" marker-start="url(#ring)" marker-mid="url(#ring)" marker-end="url(#ring)"/>
                      <path d="M330 289v6M311 299l7 2M338 306h4M325 311v5M350 312h6M312 324h6M299 294h5M328 278h6M371 305l4-3 5 3 6 1"/>
                      <path d="M273 332h13M295 334h100" stroke="#d0d0d0"/><path d="M339 336h14" stroke="#aaa" stroke-width="5" stroke-dasharray="4 1"/>
                      <path d="M403 331h6M406 336h4M420 334h3M431 331h4M434 336h4M445 334h3M457 331h4M459 336h4"/>
                    </g>
                  </svg>
                </td>
              </tr>
            </tbody>
          </table>
        </div>
        <div class="flex flex-col items-center justify-between w-3 shrink-0 py-1 border-x border-[#ddd] bg-[#f0f0f0] text-[#aaa]"><svg class="w-[5px] h-[3px] rotate-180"><use href="#caret"/></svg><svg class="w-[5px] h-[3px]"><use href="#caret"/></svg></div>
      </div>

      <div class="flex justify-end h-[23px] mt-3 text-[#555]">
        <label for="per-page" class="flex items-center justify-center w-10 rounded-l-sm border border-r-0 border-[#ccc] bg-[#ebebeb]">Show</label>
        <input id="per-page" value="15" class="w-[33px] rounded-r-sm border border-[#ccc] bg-[#fcfcfc] text-center">
      </div>
    </section>
  </main>

  <!-- Windows taskbar -->
  <footer class="grid grid-cols-[1fr_auto_1fr] items-center h-8 border-t border-[#b9c9b4] font-[Roboto,sans-serif] text-[8px] leading-[10px]">
    <div class="flex items-center gap-1 self-stretch pl-[13px] bg-linear-to-r from-[#d8e2cd] via-[#d3e5ee] to-[#d0e3e8]">
      <svg class="w-4 h-[11px]" viewBox="0 0 18 12"><path d="M4 11.500a3.600 3.600 0 0 1-.5-7A5 5 0 0 1 12.500 3 3.500 3.500 0 0 1 15 6a2.800 2.800 0 0 1 0 5.500z" fill="#8fbaf2" stroke="#6c9ce0"/></svg>
      <div>17°C<br>Bewölkt</div>
    </div>
    <div class="flex items-center self-stretch pl-[6px] bg-linear-to-r from-[#d0e3e8] to-[#d9e3bd]">
      <button aria-label="Start" class="flex justify-center w-4"><svg class="w-4 h-4" viewBox="0 0 16 16"><path d="M0 0h7.600v7.600H0zM8.400 0H16v7.600H8.400z" fill="#1fa3e8"/><path d="M0 8.400h7.600V16H0zM8.400 8.400H16V16H8.400z" fill="#0f74d4"/></svg></button>
      <div class="flex items-center gap-[6px] w-[146px] h-[21px] ml-2 mr-[2px] px-[7px] rounded-full border border-[#cdd8d4] bg-[#f0f5f4]"><svg class="w-[10px] h-[10px] text-[#333]" viewBox="0 0 16 16"><circle cx="7" cy="7" r="5.500" fill="none" stroke="currentColor" stroke-width="2"/><path d="m11 11 4.500 4.500" stroke="currentColor" stroke-width="2"/></svg><input aria-label="Suche" placeholder="Suche" class="w-24 bg-transparent font-['Open_Sans',sans-serif] text-[9px] outline-none placeholder:text-[#555]"></div>
      <button aria-label="Aktive Anwendungen" class="flex justify-center w-[29px]"><svg class="w-[14px] h-[14px]" viewBox="0 0 14 14"><path d="M4 0h10v10H4z" fill="#e8ebe8"/><path d="M0 3h5v6h6v4H0z" fill="#222"/><path d="M5 3h6v6H5z" fill="#b8bcb8"/></svg></button>
      <button aria-label="Explorer" class="flex flex-col items-center w-[29px] pt-[6px]"><svg class="w-[17px] h-[15px]" viewBox="0 0 17 15"><path d="M0 1h6l2 2h8v11H0z" fill="#e9a92e"/><path d="M0 5h17v9H0z" fill="#f7d264"/><path d="M4 10h9l1 4H3z" fill="#1976c9"/></svg><span class="w-1 h-[2px] mt-[3px] rounded-full bg-[#7a8576]"></span></button>
      <button aria-label="Edge" class="flex justify-center w-[30px]"><svg class="w-[17px] h-[17px]" viewBox="0 0 16 16"><circle cx="8" cy="8" r="8" fill="#1d78c9"/><path d="M1 6a7.500 7.500 0 0 1 15 1c0 3-2 4-4 4s-3-1-2-2.500C11 6 5 3 1 6z" fill="#45c4a0"/><path d="M1 6c4-2 8-1 8.500 1C6 7 6 11 9 13c2 1.200 4 1 5.500.2C12 17 6 17 3 14 0 11 0 8 1 6z" fill="#1b64b8"/><path d="M7 8c-1 3 1 5 4 5.500C9 15 5 14 4.500 11 4.300 9 5.500 8 7 8z" fill="#bfe0ee"/></svg></button>
      <button aria-label="Discord" class="relative flex flex-col items-center w-[29px] pt-[6px]"><svg class="w-4 h-4" viewBox="0 0 16 16"><circle cx="8" cy="8" r="8" fill="#5865d8"/><path d="M4 5c3-1.500 5-1.500 8 0 1 2 1.500 4 1.300 6-1 .8-2 1-2.500 1L10 11H6l-.8 1c-.5 0-1.500-.2-2.500-1C2.500 9 3 7 4 5z" fill="#fff"/><path d="M5 7h2v2H5zM9 7h2v2H9z" fill="#5865d8"/></svg><span class="w-1 h-[2px] mt-[2px] rounded-full bg-[#7a8576]"></span><span class="absolute top-[2px] right-[4px] w-[9px] h-[9px] rounded-full border-2 border-[#d9534f] bg-white"></span></button>
      <button aria-label="Notepad++" class="flex flex-col items-center w-[26px] h-[27px] mx-px pt-[5px] rounded-sm bg-[#e2aaa6]"><svg class="w-[15px] h-4" viewBox="0 0 15 16"><path d="M1 2h12v13H1z" fill="#f6f6e8" stroke="#999"/><path d="M1 10h12v5H1z" fill="#7db52c"/><path d="M4 5v4M6 5h3v4M14 0 8 9" fill="none" stroke="#705a30"/></svg><span class="w-1 h-[2px] mt-[3px] rounded-full bg-[#d0342c]"></span></button>
      <button aria-label="Chrome" class="flex flex-col items-center w-[26px] h-[27px] mx-[2px] pt-[5px] rounded-sm bg-[#f0f0e4]"><svg class="w-4 h-4" viewBox="0 0 16 16"><circle cx="8" cy="8" r="8" fill="#fbc116"/><path d="M8 8 1 4a8 8 0 0 0 6.500 12L11 10z" fill="#2f9e4f"/><path d="M8 4h7a8 8 0 0 0-14 0l4 6z" fill="#e33b2e"/><circle cx="8" cy="8" r="4" fill="#fff"/><circle cx="8" cy="8" r="3.100" fill="#2f74e8"/></svg><span class="w-[10px] h-[2px] mt-[3px] rounded-full bg-[#2a7bd0]"></span></button>
      <button aria-label="PowerPoint" class="flex flex-col items-center w-[29px] pt-[6px]"><svg class="w-4 h-4" viewBox="0 0 16 16"><circle cx="9" cy="8" r="7" fill="#d6492c"/><path d="M9 1a7 7 0 0 1 7 7H9z" fill="#f09a80"/><rect y="4" width="8" height="8" rx="1" fill="#b8321a"/><path d="M3 10.500V5.500h1.500a1.500 1.500 0 0 1 0 3H3" fill="none" stroke="#fff" stroke-width="1.200"/></svg><span class="w-1 h-[2px] mt-[2px] rounded-full bg-[#7a8576]"></span></button>
      <button aria-label="Visual Studio Code" class="flex flex-col items-center w-[29px] pt-[6px]"><svg class="w-4 h-4" viewBox="0 0 16 16"><path d="M1 5 11.500 14M1 11 11.500 2" stroke="#1c7dc4" stroke-width="2.400"/><path d="M11.500 0 16 2v12l-4.500 2z" fill="#2b97e0"/></svg><span class="w-1 h-[2px] mt-[2px] rounded-full bg-[#7a8576]"></span></button>
      <button aria-label="IntelliJ IDEA" class="flex flex-col items-center w-[29px] pt-[6px]"><svg class="w-4 h-4" viewBox="0 0 16 16"><path d="m0 4 5-4 4 6-5 10-4-3z" fill="#e8452c"/><path d="M6 0h10v10l-5 6-7-1z" fill="#1c6fe0"/><path d="M3 2h10v11H3z" fill="#111"/><path d="M5 4h2M6 4v4M5 8h2M9 4h2v3.500H9M5 11h4" fill="none" stroke="#fff"/></svg><span class="w-1 h-[2px] mt-[2px] rounded-full bg-[#7a8576]"></span></button>
    </div>
    <div class="flex items-center justify-end self-stretch pr-[13px] bg-linear-to-r from-[#d9e3bd] via-[#dce0a8] to-[#d2e6ae]">
      <svg class="w-[7px] h-[5px]" viewBox="0 0 8 5"><path d="m1 4 3-3 3 3" fill="none" stroke="#222" stroke-width="1.300"/></svg>
      <svg class="w-[11px] h-[8px] ml-[13px] text-[#555]" viewBox="0 0 18 12"><path d="M4 11a3.600 3.600 0 0 1-.5-6A5 5 0 0 1 13 4a3.500 3.500 0 0 1 1.500 7z" fill="#d8ddd0" stroke="currentColor" stroke-width="1.600"/><path d="M3 5a5 5 0 0 1 10 0z" fill="currentColor"/></svg>
      <span class="ml-[13px]">DEU</span>
      <svg class="w-[11px] h-[11px] ml-3" viewBox="0 0 16 16"><path d="M10 2H1v10h11V9M4 15h6M12 1v4M15 1v4M11 4h5v3h-5zM13.500 7v5" fill="none" stroke="#333" stroke-width="1.300"/></svg>
      <svg class="w-[11px] h-[9px] ml-[5px]" viewBox="0 0 16 12"><path d="M1 4h3l4-3v10L4 8H1zM10 4q2 2 0 4M12 2q3 4 0 8" fill="none" stroke="#333" stroke-width="1.300"/></svg>
      <svg class="w-[11px] h-[8px] ml-[5px]" viewBox="0 0 16 12"><path d="M2 3h12v8H2z" fill="#222"/><path d="M15 5v4M1 1l4 4M4 0v4" stroke="#222" stroke-width="1.500"/></svg>
      <div class="ml-[10px] text-right">17:30<br>09.10.2024</div>
      <svg class="w-[10px] h-[11px] ml-[5px]" viewBox="0 0 16 16"><path d="M8 1C4 1 3.500 4 3.500 7L1 12h14l-2.500-5C12.500 4 12 1 8 1zM6 13h4v2H6z" fill="#222"/><path d="M7 4h4L7 8h4M12 1h4l-4 4h4" fill="none" stroke="#cfe3a8"/></svg>
    </div>
  </footer>

  <!-- Screen recorder controls -->
  <div class="absolute left-[8px] bottom-[40px] flex items-center h-[33px] w-[283px] pl-3 pr-[7px] rounded-sm bg-[#464b55] shadow-md font-['Open_Sans',sans-serif] text-white">
    <span class="text-[10px] font-bold">0:00</span>
    <button aria-label="Pause" class="flex items-center justify-center w-[26px] h-5 ml-3 rounded-md bg-[#558ff6]"><svg class="w-[10px] h-[9px]" viewBox="0 0 10 9"><path d="M0 0h4v9H0zM6 0h4v9H6z" fill="#fff"/></svg></button>
    <button aria-label="Stopp" class="flex items-center justify-center w-[26px] h-5 ml-2 rounded-md bg-[#ea706c]"><span class="w-[9px] h-[9px] bg-white"></span></button>
    <span class="w-px h-3 ml-1 bg-[#5f6570]"></span>
    <button aria-label="Kamera" class="flex items-center gap-[7px] ml-[8px] text-[#8b9099]"><svg class="w-[12px] h-[13px]" viewBox="0 0 16 16"><circle cx="8" cy="7" r="6" fill="#fff"/><path d="M3 15h10" stroke="#fff" stroke-width="1.600"/><path d="M16 0 2 14" stroke="#464b55" stroke-width="2"/><path d="M15 1 1 14" stroke="#fff" stroke-width="1.500"/></svg><svg class="w-[4px] h-[3px]"><use href="#caret"/></svg></button>
    <button aria-label="Mikrofon" class="flex items-center gap-[7px] ml-[13px] text-[#8b9099]"><svg class="w-[12px] h-[13px]" viewBox="0 0 16 16"><rect x="5" y="0" width="6" height="10" rx="3" fill="#fff"/><path d="M2.500 7a5.500 5.500 0 0 0 11 0M8 12v4" fill="none" stroke="#fff" stroke-width="1.600"/><path d="M16 0 2 14" stroke="#464b55" stroke-width="2"/><path d="M15 1 1 14" stroke="#fff" stroke-width="1.500"/></svg><svg class="w-[4px] h-[3px]"><use href="#caret"/></svg></button>
    <span class="w-px h-3 ml-[9px] bg-[#737985]"></span>
    <button aria-label="Zeiger" class="flex items-center justify-center w-5 h-[19px] ml-[6px] rounded-sm bg-[#363a42]"><svg class="w-[10px] h-[13px]" viewBox="0 0 12 16"><path d="M1 0v13l3.200-3 2.300 5.500 2.700-1L7 9.300h4.500z" fill="#fff"/></svg></button>
    <button aria-label="Stift" class="ml-[7px]"><svg class="w-[12px] h-[12px]" viewBox="0 0 16 16"><path d="m0 16 1-5 7.500-7.500 4 4L5 15zM9.500 2.500l2-2q1-.8 2 .2l1.800 1.800q1 1 .2 2l-2 2z" fill="#fff"/></svg></button>
    <button aria-label="Löschen" class="ml-[13px]"><svg class="w-[12px] h-[12px]" viewBox="0 0 16 16"><path d="M6.500 0h3v5H14v4H2V5h4.500zM2.500 10h11l2 6H12v-3l-1 3H8.500v-3l-1 3H.5z" fill="#fff"/></svg></button>
    <button aria-label="Einklappen" class="ml-auto"><svg class="w-[5px] h-[8px]" viewBox="0 0 5 8"><path d="M4 0 1 4l3 4" fill="none" stroke="#999"/></svg></button>
  </div>

  <!-- Link target bubble -->
  <div class="absolute left-0 bottom-[32px] h-[14px] w-[155px] pl-1 rounded-tr-xs bg-[#cfdff8] font-[Roboto,sans-serif] text-[8px] leading-[14px] text-[#444]">172.21.39.149:8080/mydb/collection/48/#</div>

  <!-- Screen sharing notice -->
  <div class="absolute left-1/2 bottom-[37px] -translate-x-1/2 flex items-center w-[470px] h-[34px] px-[7px] border border-[#e4e4e4] bg-[#fcfcfc] shadow-sm font-[Roboto,sans-serif] text-[8px] whitespace-nowrap">
    <span class="w-[4px] h-[7px] border-x border-[#aaa]"></span>
    <span class="grow ml-[6px]">Fantastischer Screenshot und Bildschirmrekorder hat deinen Bildschirm freigegeben.</span>
    <button class="shrink-0 w-[93px] h-[26px] rounded-full bg-[#0b57d0] font-bold text-white">Freigabe beenden</button>
    <a href="#" class="ml-[7px] text-[#1a5fc4] underline">Ausblenden</a>
  </div>

  <!-- Hand pointer -->
  <svg class="absolute left-[1023px] top-[216px] w-3 h-4 pointer-events-none" viewBox="0 0 24 32"><path d="M8 20V3q0-2 2-2t2 2v9q1-2 3-1l1 2q2-1 3 1v1q3-1 3 2v6q0 5-3 8H11q-4-6-8-10-1-2 1-3z" fill="#fff" stroke="#222" stroke-width="2"/><path d="M12 12v6M16 13v5M19 14v5" stroke="#222" stroke-width="1.500"/></svg>

</body>
</html>
